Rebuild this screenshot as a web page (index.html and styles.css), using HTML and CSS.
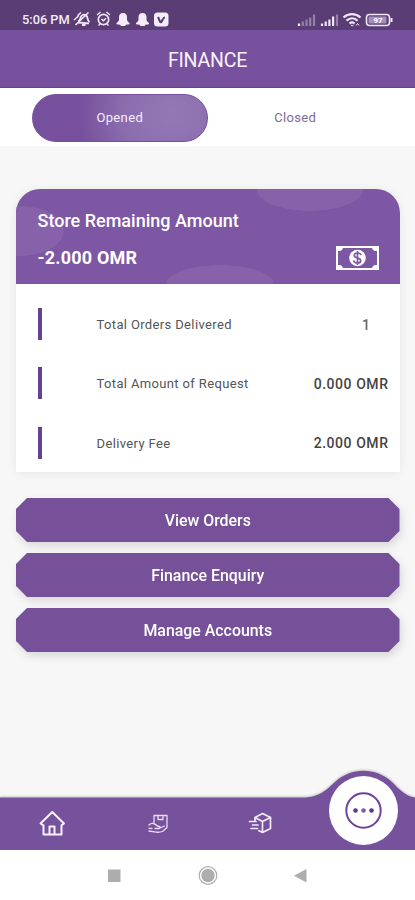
FILE: index.html
```html
<!DOCTYPE html>
<html lang="en">
<head>
<meta charset="utf-8">
<title>Finance</title>
<meta name="viewport" content="width=device-width, initial-scale=1">
<link rel="stylesheet" href="styles.css">
</head>
<body>
<div class="screen">
  <div class="status">
    <span class="clock">5:06 PM</span>
    <svg class="status-left" width="98" height="18" viewBox="0 0 98 18" fill="none" stroke="#efe6f7" stroke-width="1.5">
      <path d="M5 11.500c2.500-1 2-3.500 3.500-5.500s4.500-1.500 5.500.5c1 2.500.5 4 2.500 5.500M5 12.500l11 .8M9 15h3.500" stroke-width="1.800"/>
      <path d="M2.500 15L15.500 2.500M1 10l5-4.500M4.500 5.500L8 2.500" stroke-width="1.600"/>
      <circle cx="30.500" cy="9.500" r="5.200" stroke-width="1.700"/><path d="M28.300 9l2.200 1.700 2.500-2.400M24 5l3.500-3M37 5l-3.500-3M27 14l-1.500 1.500M34 14l1.500 1.500"/>
      <g fill="#f4edf9" stroke="none">
        <path id="ghost" d="M50 3c-2.800 0-4 1.800-4 4v2.500c0 1.500-1.200 2.700-2.500 3.500v1.300l3.500.5 1 1.200h4l1-1.200 3.500-.5V13c-1.300-.8-2.500-2-2.500-3.500V7c0-2.200-1.200-4-4-4z"/>
        <use href="#ghost" x="19.500"/>
        <rect x="81" y="2.500" width="14.500" height="14" rx="3.500"/>
      </g>
      <path d="M85 7l2 4.500c.4.900 1.300.9 1.700 0l1-2c.5-1.300 1-2 2.300-2" stroke="#563a72" stroke-width="2"/>
    </svg>
    <svg class="status-right" width="98" height="18" viewBox="0 0 98 18" fill="none" stroke="#efe6f7">
      <g stroke-width="2.200">
        <path d="M2 16v-2.500"/><path opacity=".4" d="M5.800 16v-4.500M9.500 16V9.500M13.200 16V7.500M17 16V4.500"/>
        <path d="M25 16v-2.500M28.700 16v-4.500M32.400 16V9.500M36.100 16V6.500"/><path opacity=".4" d="M40 16V4.500"/>
      </g>
      <path stroke-width="2.200" d="M46.500 7.500c5-4.500 12-4.500 17 0M49.500 10.700c3.500-3 8-3 11 0M52.500 13.500c1.500-1.300 3.500-1.300 5 0"/>
      <path d="M54 14.700l1.300 1.500 1.300-1.500M59 15.500l1.500-2 1.500 2"/>
      <rect x="69.500" y="4.500" width="23" height="11" rx="3" stroke-width="1.600"/><rect x="71.500" y="6.500" width="18" height="7" rx="1" fill="#a58fba" stroke="none"/>
      <path stroke-width="2" d="M94.500 8v4"/>
      <text x="81" y="13" text-anchor="middle" class="battery">97</text>
    </svg>
  </div>
  <header class="header"><h1>FINANCE</h1></header>
  <div class="tabs">
    <div class="tab active">Opened</div>
    <div class="tab">Closed</div>
  </div>
  <main class="main">
    <section class="card">
      <div class="card-head">
        <h2>Store Remaining Amount</h2>
        <div class="balance">
          <strong>-2.000 OMR</strong>
          <svg width="43" height="24" viewBox="0 0 43 24" fill="none" stroke="#fff">
            <rect x="1" y="1" width="41" height="22" stroke-width="2"/>
            <path fill="#fff" stroke="none" d="M1 1h6c0 2.500-1.500 4-4 4H1zM42 1h-6c0 2.500 1.500 4 4 4h2zM1 23h6c0-2.500-1.500-4-4-4H1zM42 23h-6c0-2.500 1.500-4 4-4h2z"/>
            <circle cx="21.500" cy="12" r="8.300" fill="#fff" stroke="none"/>
            <path stroke="#7d57a3" stroke-width="1.700" d="M25 9c-.5-1.500-2-2-3.500-2-4 0-4.500 4 0 5s4 5 0 5c-2 0-3.500-.8-4-2.500M21.500 5v14"/>
          </svg>
        </div>
      </div>
      <div class="row"><i class="bar"></i><span class="label">Total Orders Delivered</span><b class="count">1</b></div>
      <div class="row"><i class="bar"></i><span class="label">Total Amount of Request</span><b>0.000 OMR</b></div>
      <div class="row"><i class="bar"></i><span class="label">Delivery Fee</span><b>2.000 OMR</b></div>
    </section>
    <div class="actions">
      <div class="lift"><button>View Orders</button></div>
      <div class="lift"><button>Finance Enquiry</button></div>
      <div class="lift"><button>Manage Accounts</button></div>
    </div>
  </main>
  <nav class="nav">
    <svg width="415" height="84" viewBox="0 0 415 84" fill="none">
      <path class="nav-shape" d="M0 31.500H303C320 31.500 327 23 335 16C351 1 376 1 392 16C399 23 405 30 415 31.500V84H0Z"/>
      <g stroke="#f8f0ff" stroke-width="2" stroke-linejoin="round">
        <path d="M40.500 57.500L52.300 46 64 57.500l-2.500 1.800v9.200H43.500v-9.200zM49.500 68V60.500h5V68"/>
      </g>
      <g stroke="#eadcf5" stroke-width="1.300" stroke-linecap="round" stroke-linejoin="round">
        <path d="M154 56.500v-7h13v12l-4.500 4c-3 1-6 .8-8 .3l-5.500-.8M158 50v3.500h5V50M149 59c1-1 2.500-1.800 4-1.500 2 0 3.500 2.500 6 3 2 .5 1 2-.5 2h-3.500M159 62.500l5.500-2.500M149 62.300h3"/>
      </g>
      <g stroke="#f3e9fb" stroke-width="1.700" stroke-linecap="round" stroke-linejoin="round">
        <path d="M255 51.500l7.500-4 8 4v11l-8 4-3.500-1.800M255 51.500l7.500 4 8-4M262.500 55.500v11M255 51.500v3.500M249.500 55.500h6.500M252.500 59h5.500M251 62.500h6.500"/>
      </g>
      <circle cx="363.500" cy="44.500" r="34.500" fill="#fff"/>
      <circle cx="363.500" cy="44.500" r="17.200" stroke="#6d4298" stroke-width="2"/>
      <g fill="#5e3389"><circle cx="355.500" cy="44.500" r="2.300"/><circle cx="363.500" cy="44.500" r="2.300" opacity=".8"/><circle cx="371.500" cy="44.500" r="2.300"/></g>
    </svg>
  </nav>
  <div class="system">
    <svg width="415" height="50" viewBox="0 0 415 50" fill="#adadad">
      <path d="M108 19.500h12.500V32H108zM306.500 19v13.500L294 25.700z"/>
      <circle cx="208" cy="25.500" r="6.700"/><circle cx="208" cy="25.500" r="8.800" fill="none" stroke="#adadad" stroke-width="1.200"/>
    </svg>
  </div>
</div>
</body>
</html>
```
FILE: styles.css
```css
* { box-sizing: border-box; }
body { margin: 0; font-family: Roboto, "Liberation Sans", sans-serif; }
.screen { width: 415px; height: 900px; display: flex; flex-direction: column; background: #f7f7f7; overflow: hidden; }
svg { display: block; flex: none; }
h1, h2 { margin: 0; }

.status { height: 30px; flex: none; display: flex; align-items: center; padding: 8px 20px 0 22px; background: #5a3d75; color: #f3ebf9; }
.clock { width: 48px; font-size: 12.800px; font-weight: 500; white-space: nowrap; }
.status-left { margin-left: 3px; }
.status-right { margin-left: auto; }
.battery { font-size: 8px; font-weight: 700; fill: #fff; stroke: none; }

.header { height: 58px; flex: none; display: flex; align-items: center; justify-content: center; background: #77519d; border-bottom: 1px solid #67428c; color: #f8f2fd; }
.header h1 { font-size: 19.500px; font-weight: 400; letter-spacing: -.2px; padding-top: 3px; }

.tabs { height: 58px; flex: none; display: flex; align-items: center; padding: 1px 32px 0; background: #fff; }
.tab { width: 176px; height: 48px; display: flex; align-items: center; justify-content: center; border-radius: 24px; font-size: 13px; letter-spacing: .35px; color: #7f6a95; }
.tab.active { color: #f6eefc; background: radial-gradient(circle at 80% 40%, #9478b4, #8b6dae 35%, #76509c 66%); border: 1px solid #76509c; }

.main { flex: 1; padding: 42.500px 15.500px 0 16px; }
.card { height: 283.500px; background: #fff; border-radius: 24px 24px 0 0; box-shadow: 0 1px 10px rgba(0,0,0,.07); overflow: hidden; }
.card-head { height: 95px; padding: 20.500px 21px 0 21.500px; color: #fff;
  background:
    radial-gradient(ellipse 54px 22px at 294px 0, #8762ab 98%, transparent 100%),
    radial-gradient(ellipse 54px 19px at 204px 95px, #8762ab 98%, transparent 100%),
    radial-gradient(ellipse 44px 25px at 4px 42px, #8762ab 98%, transparent 100%), #7d57a3; }
.card-head h2 { font-size: 18px; line-height: 24px; font-weight: 500; }
.balance { display: flex; justify-content: space-between; align-items: center; margin-top: 13px; }
.balance strong { font-size: 18px; line-height: 24px; font-weight: 700; letter-spacing: .2px; }
.row { height: 59.300px; display: flex; align-items: center; padding: 0 11px 0 21.500px; }
.card-head + .row { margin-top: 11px; }
.bar { width: 4.500px; height: 32px; background: #67418f; }
.label { margin-left: 54.500px; flex: 1; font-size: 13px; letter-spacing: .36px; color: #555; padding-top: 1px; }
.row b { font-size: 14px; font-weight: 500; letter-spacing: .55px; color: #444; padding-top: 1px; }
.row .count { padding-right: 18px; color: #666; }

.actions { display: grid; gap: 11px; margin-top: 26px; }
.lift { height: 44px; filter: drop-shadow(2px 4px 4px rgba(0,0,0,.12)); }
.lift button { display: block; width: 100%; height: 44px; border: 0; background: #765199; color: #fff; font: 500 15.900px Roboto, sans-serif; clip-path: polygon(11px 0, calc(100% - 11px) 0, 100% 11px, 100% 33px, calc(100% - 11px) 100%, 11px 100%, 0 33px, 0 11px); }

.nav { height: 84px; flex: none; }
.nav-shape { fill: #76519c; filter: drop-shadow(0 -1px 1px rgba(0,0,0,.2)); }
.system { height: 50px; flex: none; background: #fff; }
```
